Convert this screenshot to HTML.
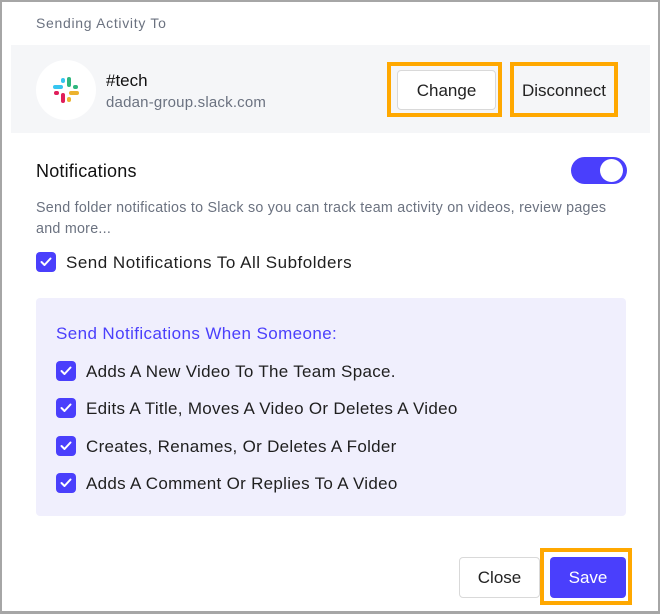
<!DOCTYPE html>
<html><head><meta charset="utf-8"><style>
*{margin:0;padding:0;box-sizing:border-box}
body{width:660px;height:614px;background:#fff;font-family:"Liberation Sans",sans-serif;position:relative;overflow:hidden}
.frame{position:absolute;left:0;top:0;width:660px;height:614px;border:2px solid #a6a6a6;border-bottom-width:3px}
.a{position:absolute;white-space:nowrap}
.cb{position:absolute;width:20px;height:20px;background:#4a3ffc;border-radius:4px}
.cb svg{position:absolute;left:4px;top:5px}
.it{font-size:17px;color:#1f1f1f;letter-spacing:0.3px}
.or{position:absolute;border:4px solid #ffa800}
</style></head><body>
<div class="frame"></div>
<div class="a" style="left:36px;top:15px;font-size:14px;color:#6b7280;letter-spacing:0.7px">Sending Activity To</div>
<div class="a" style="left:11px;top:45px;width:639px;height:88px;background:#f5f6f8"></div>
<div class="a" style="left:36px;top:60px;width:60px;height:60px;border-radius:50%;background:#fff"></div>
<svg class="a" style="left:52px;top:76px" width="28" height="28" viewBox="0 0 28 28">
<rect x="1" y="9" width="10" height="4" rx="2" fill="#36c5f0"/><rect x="9" y="2" width="4" height="5" rx="2" fill="#36c5f0"/>
<rect x="15" y="1" width="4" height="10" rx="2" fill="#2eb67d"/><rect x="21" y="9" width="5" height="4" rx="2" fill="#2eb67d"/>
<rect x="17" y="15" width="10" height="4" rx="2" fill="#ecb22e"/><rect x="15" y="21" width="4" height="5" rx="2" fill="#ecb22e"/>
<rect x="9" y="17" width="4" height="10" rx="2" fill="#e01e5a"/><rect x="2" y="15" width="5" height="4" rx="2" fill="#e01e5a"/>
</svg>
<div class="a" style="left:106px;top:71px;font-size:17px;color:#111">#tech</div>
<div class="a" style="left:106px;top:94px;font-size:15px;color:#6b7280;letter-spacing:0.2px">dadan-group.slack.com</div>
<div class="or" style="left:387px;top:62px;width:115px;height:55px"></div>
<div class="a" style="left:397px;top:70px;width:99px;height:40px;background:#fff;border:1px solid #d9d9d9;border-radius:4px;font-size:17px;color:#222;text-align:center;line-height:40px">Change</div>
<div class="or" style="left:510px;top:62px;width:108px;height:55px"></div>
<div class="a" style="left:514px;top:67px;width:100px;height:47px;font-size:17px;color:#222;text-align:center;line-height:47px">Disconnect</div>
<div class="a" style="left:36px;top:161px;font-size:18px;color:#111;letter-spacing:0.2px">Notifications</div>
<div class="a" style="left:571px;top:157px;width:56px;height:27px;border-radius:14px;background:#4a3ffc"></div>
<div class="a" style="left:600px;top:159px;width:23px;height:23px;border-radius:50%;background:#fff"></div>
<div class="a" style="left:36px;top:198px;font-size:14.3px;color:#6b7280;line-height:21px;letter-spacing:0.25px">Send folder notificatios to Slack so you can track team activity on videos, review pages<br>and more...</div>
<div class="cb" style="left:36px;top:252px"><svg width="12" height="10" viewBox="0 0 12 10"><path d="M1.5 5l3 3 6-6.5" stroke="#fff" stroke-width="2" fill="none" stroke-linecap="round" stroke-linejoin="round"/></svg></div>
<div class="a it" style="left:66px;top:253px;letter-spacing:0.5px">Send Notifications To All Subfolders</div>
<div class="a" style="left:36px;top:298px;width:590px;height:218px;background:#f0effd;border-radius:4px"></div>
<div class="a" style="left:56px;top:324px;font-size:17px;color:#4a3ffc;letter-spacing:0.4px">Send Notifications When Someone:</div>
<div class="cb" style="left:56px;top:361px"><svg width="12" height="10" viewBox="0 0 12 10"><path d="M1.5 5l3 3 6-6.5" stroke="#fff" stroke-width="2" fill="none" stroke-linecap="round" stroke-linejoin="round"/></svg></div>
<div class="a it" style="left:86px;top:362px">Adds A New Video To The Team Space.</div>
<div class="cb" style="left:56px;top:398px"><svg width="12" height="10" viewBox="0 0 12 10"><path d="M1.5 5l3 3 6-6.5" stroke="#fff" stroke-width="2" fill="none" stroke-linecap="round" stroke-linejoin="round"/></svg></div>
<div class="a it" style="left:86px;top:399px">Edits A Title, Moves A Video Or Deletes A Video</div>
<div class="cb" style="left:56px;top:436px"><svg width="12" height="10" viewBox="0 0 12 10"><path d="M1.5 5l3 3 6-6.5" stroke="#fff" stroke-width="2" fill="none" stroke-linecap="round" stroke-linejoin="round"/></svg></div>
<div class="a it" style="left:86px;top:437px">Creates, Renames, Or Deletes A Folder</div>
<div class="cb" style="left:56px;top:473px"><svg width="12" height="10" viewBox="0 0 12 10"><path d="M1.5 5l3 3 6-6.5" stroke="#fff" stroke-width="2" fill="none" stroke-linecap="round" stroke-linejoin="round"/></svg></div>
<div class="a it" style="left:86px;top:474px">Adds A Comment Or Replies To A Video</div>
<div class="a" style="left:459px;top:557px;width:81px;height:41px;border:1px solid #d9d9d9;border-radius:4px;font-size:17px;color:#222;text-align:center;line-height:40px">Close</div>
<div class="or" style="left:540px;top:548px;width:92px;height:57px"></div>
<div class="a" style="left:550px;top:557px;width:76px;height:41px;background:#4a3ffc;border-radius:4px;font-size:17px;color:#fff;text-align:center;line-height:42px">Save</div>
</body></html>
